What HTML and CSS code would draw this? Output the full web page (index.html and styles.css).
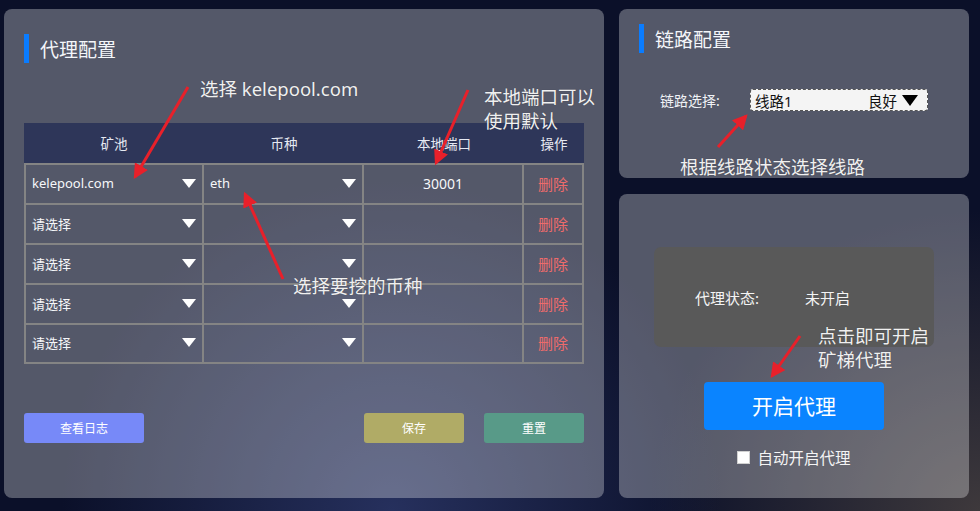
FILE: index.html
```html
<!DOCTYPE html>
<html lang="zh">
<head>
<meta charset="utf-8">
<title>代理配置</title>
<link rel="stylesheet" href="styles.css">
</head>
<body>
<div class="page">
  <section class="panel proxy">
    <h2 class="title">代理配置</h2>
    <div class="table">
      <div class="thead">
        <div>矿池</div><div>币种</div><div>本地端口</div><div>操作</div>
      </div>
      <div class="row">
        <div class="cell sel"><span>kelepool.com</span><i class="tri"></i></div>
        <div class="cell sel"><span>eth</span><i class="tri"></i></div>
        <div class="cell port">30001</div>
        <div class="cell del">删除</div>
      </div>
      <div class="row">
        <div class="cell sel"><span>请选择</span><i class="tri"></i></div>
        <div class="cell sel"><span></span><i class="tri"></i></div>
        <div class="cell port"></div>
        <div class="cell del">删除</div>
      </div>
      <div class="row">
        <div class="cell sel"><span>请选择</span><i class="tri"></i></div>
        <div class="cell sel"><span></span><i class="tri"></i></div>
        <div class="cell port"></div>
        <div class="cell del">删除</div>
      </div>
      <div class="row">
        <div class="cell sel"><span>请选择</span><i class="tri"></i></div>
        <div class="cell sel"><span></span><i class="tri"></i></div>
        <div class="cell port"></div>
        <div class="cell del">删除</div>
      </div>
      <div class="row last">
        <div class="cell sel"><span>请选择</span><i class="tri"></i></div>
        <div class="cell sel"><span></span><i class="tri"></i></div>
        <div class="cell port"></div>
        <div class="cell del">删除</div>
      </div>
    </div>
    <div class="actions">
      <button class="btn log">查看日志</button>
      <span class="spacer"></span>
      <button class="btn save">保存</button>
      <button class="btn reset">重置</button>
    </div>
  </section>
  <div class="side">
    <section class="panel link">
      <h2 class="title">链路配置</h2>
      <div class="link-row">
        <span class="link-label">链路选择:</span>
        <div class="link-select"><span>线路1</span><span class="right">良好 <i class="tri-black"></i></span></div>
      </div>
    </section>
    <section class="panel control">
      <div class="status">
        <span class="status-label">代理状态:</span>
        <span class="status-value">未开启</span>
      </div>
      <button class="start">开启代理</button>
      <label class="auto"><span class="box"></span>自动开启代理</label>
    </section>
  </div>
</div>

<div class="notes">
  <svg class="arrows" width="980" height="511" viewBox="0 0 980 511">
    <defs>
      <marker id="ah" markerWidth="5" markerHeight="5" refX="4.2" refY="2.5" orient="auto" markerUnits="strokeWidth">
        <path d="M0,0 L5,2.5 L0,5 Z" fill="#e8202a"/>
      </marker>
    </defs>
    <line x1="188" y1="87" x2="135" y2="177" stroke="#e8202a" stroke-width="3" marker-end="url(#ah)"/>
    <line x1="468" y1="90" x2="436" y2="163" stroke="#e8202a" stroke-width="3" marker-end="url(#ah)"/>
    <line x1="283" y1="279" x2="245" y2="194" stroke="#e8202a" stroke-width="3" marker-end="url(#ah)"/>
    <line x1="718" y1="147" x2="746" y2="116" stroke="#e8202a" stroke-width="3" marker-end="url(#ah)"/>
    <line x1="800" y1="336" x2="772" y2="376" stroke="#e8202a" stroke-width="3" marker-end="url(#ah)"/>
  </svg>
  <div class="note n1">选择 kelepool.com</div>
  <div class="note n2">本地端口可以<br>使用默认</div>
  <div class="note n3">选择要挖的币种</div>
  <div class="note n4">根据线路状态选择线路</div>
  <div class="note n5">点击即可开启<br>矿梯代理</div>
</div>
</body>
</html>
```

FILE: styles.css
```css
* { box-sizing: border-box; }
html, body { margin: 0; height: 100%; }
body {
  width: 980px;
  height: 511px;
  overflow: hidden;
  position: relative;
  font-family: "Noto Sans", "Noto Sans CJK SC", sans-serif;
  color: #f0f2f6;
  background-color: #0b1029;
  background-image:
    radial-gradient(ellipse 330px 330px at 40% 100%, #26305d 0%, rgba(38,48,93,0) 100%),
    radial-gradient(ellipse 330px 300px at 100% 100%, #3e393c 0%, rgba(62,57,60,0) 100%);
}
.page {
  display: flex;
  gap: 15px;
  padding: 9px 11px 13px 4px;
  height: 511px;
}
.panel {
  background: rgba(255,255,255,0.30);
  border-radius: 8px;
}
.title {
  margin: 0;
  height: 29px;
  line-height: 33px;
  border-left: 5px solid #0a7cff;
  padding-left: 11px;
  font-size: 19px;
  font-weight: 400;
  color: #f4f6fa;
}
.proxy {
  width: 600px;
  height: 489px;
  padding: 25px 20px 0 20px;
}
.table {
  margin-top: 60px;
  width: 560px;
}
.thead, .row {
  display: grid;
  grid-template-columns: 180px 160px 160px 60px;
  height: 40px;
}
.thead {
  background: #2e3659;
  align-items: center;
  text-align: center;
  font-size: 13.5px;
  color: #e6e9f2;
}
.row {
  border-top: 2px solid #848484;
}
.row.last {
  height: 41px;
  border-bottom: 2px solid #848484;
}
.cell {
  border-right: 2px solid #848484;
  display: flex;
  align-items: center;
  padding-bottom: 2px;
  font-size: 13px;
  color: #f6f7fa;
}
.cell:first-child { border-left: 2px solid #848484; }
.sel {
  justify-content: space-between;
  padding-left: 6px;
  padding-right: 6px;
}
.tri {
  width: 0;
  height: 0;
  border-left: 7.5px solid transparent;
  border-right: 7.5px solid transparent;
  border-top: 9px solid #ffffff;
}
.port {
  justify-content: center;
  font-size: 14px;
}
.del {
  justify-content: center;
  font-size: 15px;
  color: #ee6b6b;
}
.actions {
  display: flex;
  margin-top: 49px;
  gap: 20px;
}
.spacer { flex: 1; }
.btn {
  border: 0;
  border-radius: 3px;
  height: 30px;
  width: 100px;
  font-family: inherit;
  font-size: 12px;
  color: #ffffff;
  padding: 0;
}
.btn.log { width: 120px; background: #7789f8; }
.btn.save { background: #b0ab66; }
.btn.reset { background: #589a88; }

.side {
  width: 350px;
  display: flex;
  flex-direction: column;
  gap: 16px;
}
.link {
  height: 169px;
  padding: 15px 20px 0 20px;
}
.link-row {
  display: flex;
  align-items: center;
  margin-top: 36px;
  padding-left: 21px;
  height: 22px;
}
.link-label {
  width: 90px;
  font-size: 14px;
  color: #f0f2f6;
}
.link-select {
  width: 178px;
  height: 22px;
  background: #f4f4f4;
  border: 1px dashed #555;
  border-radius: 3px;
  display: flex;
  align-items: center;
  justify-content: space-between;
  padding: 0 9px 0 4px;
  font-size: 14.5px;
  color: #111;
}
.right { display: flex; align-items: center; gap: 5px; }
.tri-black {
  width: 0;
  height: 0;
  border-left: 8px solid transparent;
  border-right: 8px solid transparent;
  border-top: 11px solid #000;
}
.control {
  flex: 1;
  padding-top: 53px;
  display: flex;
  flex-direction: column;
  align-items: center;
}
.status {
  width: 280px;
  height: 100px;
  background: #595959;
  border-radius: 7px;
  display: flex;
  align-items: center;
  padding-left: 41px;
  font-size: 15px;
  color: #f4f4f4;
}
.status-label { width: 110px; }
.start {
  margin-top: 35px;
  width: 180px;
  height: 48px;
  border: 0;
  border-radius: 4px;
  background: #0a84ff;
  color: #fff;
  font-family: inherit;
  font-size: 21px;
  padding: 0 0 3px 0;
}
.auto {
  margin-top: 16px;
  display: flex;
  align-items: center;
  gap: 7px;
  font-size: 15.5px;
  color: #f4f4f4;
}
.box {
  width: 13px;
  height: 13px;
  background: #fff;
  border: 1px solid #d0d0d0;
}

.notes {
  position: absolute;
  left: 0;
  top: 0;
  width: 980px;
  height: 511px;
  pointer-events: none;
}
.arrows { position: absolute; left: 0; top: 0; }
.note {
  position: absolute;
  font-size: 18.5px;
  line-height: 24px;
  color: #f0f0f0;
  white-space: nowrap;
  text-shadow: 0 0 1px rgba(0,0,0,0.3);
}
.n1 { left: 200px; top: 77px; }
.n2 { left: 484px; top: 85px; }
.n3 { left: 293px; top: 274px; }
.n4 { left: 680px; top: 155px; }
.n5 { left: 818px; top: 324px; }
```
